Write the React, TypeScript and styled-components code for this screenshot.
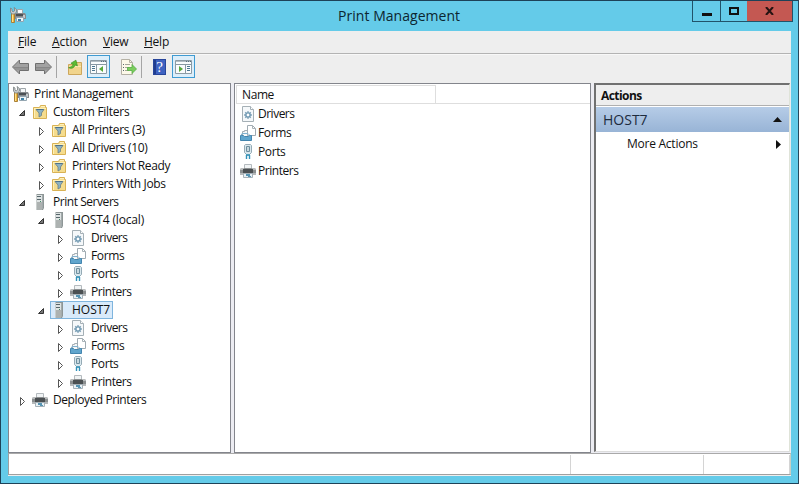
import React from 'react';
import styled, { createGlobalStyle, css } from 'styled-components';

const GlobalStyle = createGlobalStyle`
  * { box-sizing: border-box; }
  html, body { margin: 0; padding: 0; }
  body { font-family: "Open Sans", "Noto Sans", sans-serif; font-size: 12px; color: #111; overflow: hidden; }
  svg { display: block; flex: none; }
`;

const Window = styled.div`
  width: 799px;
  height: 484px;
  display: flex;
  flex-direction: column;
  background: #64cbe9;
  border: 1px solid #1d4258;
  border-right-color: #27495e;
  padding: 0 7px 7px;
`;

const TitleBar = styled.header`
  height: 30px;
  flex: none;
  display: flex;
  align-items: flex-start;
  margin-right: -2px;
`;

const AppIcon = styled.div`
  padding: 6px 0 0 2px;
  width: 180px;
`;

const Title = styled.h1`
  margin: 0;
  flex: 1;
  padding: 5px 0 0 150px;
  font-size: 14px;
  line-height: 20px;
  font-weight: 400;
  letter-spacing: 0.04px;
  white-space: nowrap;
  color: #0c2630;
`;

const Controls = styled.div`
  display: flex;
  height: 21px;
  border: 1px solid #21536a;
  border-top: 0;
`;

const ControlButton = styled.button<{ $w: number; $close?: boolean }>`
  width: ${p => p.$w}px;
  height: 20px;
  padding: 0;
  border: 0;
  border-left: ${p => (p.$close ? 0 : 1)}px solid #21536a;
  background: ${p => (p.$close ? '#c45852' : 'transparent')};
  display: flex;
  align-items: center;
  justify-content: center;
  &:first-child { border-left: 0; }
`;

const Client = styled.div`
  flex: 1;
  width: 783px;
  display: flex;
  flex-direction: column;
  background: #eeeeee;
  min-height: 0;
`;

const MenuBar = styled.nav`
  height: 23px;
  flex: none;
  display: flex;
  padding: 1px 0 0 10px;
  border-bottom: 1px solid #b3b3b3;
`;

const MenuItem = styled.span<{ $w: number; $ls?: number }>`
  width: ${p => p.$w}px;
  line-height: 20px;
  letter-spacing: ${p => p.$ls ?? 0}px;
  white-space: nowrap;
  &::first-letter { text-decoration: underline; }
`;

const Toolbar = styled.div`
  height: 29px;
  flex: none;
  display: flex;
  align-items: center;
  padding: 0 0 5px 3px;
  border-top: 1px solid #f8f8f8;
`;

const Tool = styled.button<{ $ml?: number; $active?: boolean; $w?: number }>`
  width: ${p => p.$w ?? 18}px;
  height: ${p => (p.$active ? 23 : 22)}px;
  margin: 0 0 0 ${p => p.$ml ?? 0}px;
  padding: 0;
  display: flex;
  align-items: center;
  justify-content: center;
  border: 0;
  background: transparent;
  ${p => p.$active && css`
    border: 1px solid #3f9bd2;
    background: #dceefa;
  `}
`;

const Divider = styled.i<{ $ml: number }>`
  width: 1px;
  height: 22px;
  margin-left: ${p => p.$ml}px;
  background: #a5a5a5;
`;

const Panes = styled.main`
  height: 370px;
  flex: none;
  display: grid;
  grid-template-columns: 223px 357px 197px;
  column-gap: 3px;
  background: #ececf2;
`;

const Pane = styled.section`
  background: #fff;
  border: 1px solid #83858c;
  min-width: 0;
`;

const TreePane = styled(Pane)`
  padding-top: 1px;
`;

const ListPane = styled(Pane)`
  padding: 1px 0 0 1px;
`;

const ActionsPane = styled.aside`
  background: #fff;
  border-top: 2px solid #707070;
  border-left: 2px solid #707070;
  border-right: 1px solid #dfe3d8;
  border-bottom: 1px solid #dcdcdc;
  margin: 0 1px 1px 0;
`;

const TreeRow = styled.div<{ $level: number }>`
  height: 18px;
  display: flex;
  align-items: center;
  padding-left: ${p => (p.$level === 0 ? 3 : p.$level * 19 - 10)}px;
`;

const Expander = styled.span`
  width: 13px;
  height: 18px;
  padding-top: 5px;
  flex: none;
`;

const Node = styled.span<{ $selected?: boolean }>`
  height: 18px;
  display: flex;
  align-items: center;
  gap: 5px;
  padding: 0 2px 0 0;
  border: 1px solid transparent;
  ${p => p.$selected && css`
    background: #d9eafa;
    border-color: #7fb5de;
  `}
`;

const Label = styled.span<{ $ls?: number }>`
  line-height: 16px;
  white-space: nowrap;
  letter-spacing: ${p => p.$ls ?? 0}px;
`;

const ListHeader = styled.div`
  width: 200px;
  height: 19px;
  padding-left: 5px;
  line-height: 18px;
  letter-spacing: -0.4px;
  border: 1px solid #dedede;
`;

const HeaderLine = styled.div`
  background: linear-gradient(#dedede, #dedede) 0 18px / 100% 1px no-repeat;
`;

const ListRow = styled.div`
  height: 19px;
  display: flex;
  align-items: center;
  gap: 2px;
  padding-left: 4px;
`;

const ActionsTitle = styled.h2`
  margin: 0;
  height: 21px;
  padding-left: 5px;
  font-size: 12px;
  line-height: 21px;
  font-weight: 700;
  letter-spacing: -0.55px;
  background: #eeeeee;
  border-bottom: 1px solid #b0b0b0;
`;

const ActionsGroup = styled.div`
  height: 25px;
  margin-top: 1px;
  padding: 0 7px 0 7px;
  display: flex;
  align-items: center;
  justify-content: space-between;
  font-size: 14px;
  color: #1d2b3d;
  background: linear-gradient(#b6cce7, #98b4d6);
`;

const ActionRow = styled.div`
  height: 22px;
  margin-top: 1px;
  padding: 0 8px 0 31px;
  display: flex;
  align-items: center;
  justify-content: space-between;
`;

const StatusBar = styled.footer`
  height: 22px;
  flex: none;
  display: grid;
  grid-template-columns: 562px 133px 1fr;
  background: #fff;
  border: 1px solid #a0a0a0;
  border-top-color: #a9a9a9;
  border-right-color: #c9cfc4;
`;

const StatusCell = styled.div`
  margin-top: 1px;
  border-right: 1px solid #d4d4d4;
`;

const PrinterIcon = () => (
  <svg width="16" height="16" viewBox="0 0 16 16">
    <path d="M4.500 1.500h7v5h-7z" fill="#f1f4f5" stroke="#b4babe" />
    <path d="M1 5h14l1 2v5H0V7z" fill="#8b8f90" />
    <path d="M1 5h3v2H0zM12 5h3l1 2h-4z" fill="#b9bcbd" />
    <path d="M3 6h10v4H3z" fill="#4b5052" />
    <path d="M0 10h3v2H0zM13 10h3v2h-3z" fill="#b5b8b9" />
    <path d="M3.500 10.500h9v4h-9z" fill="#e9f1f5" stroke="#a5b1b8" />
    <path d="M6 11h4v2H6zM8 13h3v1H8z" fill="#5795b3" />
  </svg>
);

const ManagementIcon = () => (
  <svg width="16" height="16" viewBox="0 0 16 16">
    <path d="M7.500 2.500h5v4h-5z" fill="#f5f7f8" stroke="#9fa6aa" />
    <path d="M5 6h10l1 2v4H5z" fill="#85898c" />
    <path d="M6 7h7v2H6z" fill="#4a5055" />
    <path d="M13 8h2v3h-2z" fill="#c5c9cb" />
    <path d="M6.500 10.500h7v4h-7z" fill="#eef5f8" stroke="#93a5b0" />
    <path d="M8 12h3v2H8z" fill="#3d81a8" />
    <path d="M1.500 6h3v9.500h-3z" fill="#efb63c" stroke="#a98038" />
    <path d="M2.500 7v8" stroke="#ffe08b" />
    <path d="M.5 1L2 2v2l1 1 1.500-1V2L4 .5l2.500 2V5l-2 2H2L.5 5z" fill="#c9cdce" stroke="#7b8283" strokeWidth=".8" />
  </svg>
);

const FolderIcon = () => (
  <svg width="16" height="16" viewBox="0 0 16 16">
    <path d="M1.500 3.500h6l1-2h5v2h1v11h-13z" fill="#f5dc8d" stroke="#d9b254" />
    <path d="M9 2.500h4" stroke="#fff0bd" />
    <path d="M2 4.500h12M2.500 5v9" stroke="#fff0b6" fill="none" />
    <path d="M4 5.500h8L9.500 9v2.500L7 13V9z" fill="#8db2c2" stroke="#6a7f85" strokeWidth=".8" />
    <path d="M4.500 5.500h7" stroke="#4e718a" />
  </svg>
);

const ServerIcon = () => (
  <svg width="16" height="16" viewBox="0 0 16 16">
    <path d="M4 1l1-1h7v14l-1 2H4z" fill="#8e9696" />
    <path d="M4 1h6v15H4z" fill="#adb2b1" />
    <path d="M4 1h6v7H4z" fill="#dee3e3" />
    <path d="M5 2.500h4M5 5.500h4" stroke="#56666b" />
    <path d="M4.500 1v15" stroke="#c9cecd" />
    <path d="M8 7h1v1H8z" fill="#3e8d66" />
    <path d="M10.500 1v14" stroke="#a2aaab" />
  </svg>
);

const DriverIcon = () => (
  <svg width="16" height="16" viewBox="0 0 16 16">
    <path d="M2.500.5h8l3 3v12h-11z" fill="#f5f8fa" stroke="#a5b0b6" />
    <path d="M10.500.5v3h3" fill="#fff" stroke="#a5b0b6" />
    <path d="M8 5v8M4 9h8M5.200 6.200l5.600 5.600M10.800 6.200l-5.600 5.600" stroke="#85a5ba" strokeWidth="1.300" />
    <circle cx="8" cy="9" r="2.100" fill="#fff" stroke="#6e98b2" strokeWidth="1.300" />
  </svg>
);

const FormsIcon = () => (
  <svg width="16" height="16" viewBox="0 0 16 16">
    <path d="M2.500 10.500v-4h2v-1h5v5" fill="#f5f7f8" stroke="#a5afb5" />
    <path d="M7.500.5h5l3 3v7h-8z" fill="#fff" stroke="#a0abb2" />
    <path d="M12.500.5v3h3" fill="none" stroke="#a9b2b7" />
    <path d="M.5 10.500h3l1 1h4l1-1h2v5H.5z" fill="#5fa5cd" stroke="#4385ae" />
    <path d="M1 10.500l1-2h6l2 2" fill="none" stroke="#82b2cf" />
  </svg>
);

const PortIcon = () => (
  <svg width="16" height="16" viewBox="0 0 16 16">
    <path d="M4.500 1.500l1-1h5l1 1v7l-2 2h-3l-2-2z" fill="#d9e7ed" stroke="#95abb6" />
    <path d="M6.500 2.500h3v5h-3z" fill="#edf5f8" stroke="#6f8f9e" />
    <path d="M8 3v4" stroke="#a2bac5" />
    <path d="M6 10h4v2H6z" fill="#57a0bd" />
    <path d="M6.500 11v4M9.500 11v4" stroke="#3292ba" strokeWidth="1.400" />
  </svg>
);

const icons = {
  printer: PrinterIcon,
  management: ManagementIcon,
  folder: FolderIcon,
  server: ServerIcon,
  driver: DriverIcon,
  forms: FormsIcon,
  port: PortIcon,
};
type IconName = keyof typeof icons;

const OpenArrow = () => (
  <svg width="9" height="10" viewBox="0 0 9 10">
    <path d="M6.500 2.500v5h-5z" fill="#777" stroke="#333" />
  </svg>
);

const ClosedArrow = () => (
  <svg width="9" height="10" viewBox="0 0 9 10">
    <path d="M2.500 1.500v8l4-4z" fill="#fff" stroke="#555" />
  </svg>
);

const ArrowIcon = ({ right = false }: { right?: boolean }) => (
  <svg width="17" height="16" viewBox="0 0 17 16">
    <path
      d={right ? 'M16.500 8L9.500 1v3.500h-9v7h9V15z' : 'M.5 8l7-7v3.500h9v7h-9V15z'}
      fill="#a2a2a2" stroke="#707070"
    />
    <path d={right ? 'M1 8.500h14M1 10h13' : 'M2 8.500h14M3 10h13'} stroke="#878787" />
  </svg>
);

const UpFolderIcon = () => (
  <svg width="16" height="16" viewBox="0 0 16 16">
    <path d="M1.500 5.500h5l1-2h7v12h-13z" fill="#f1d48c" stroke="#cda75c" />
    <path d="M2 7.500h12" stroke="#fbe8b2" />
    <path d="M3 10.500c4 0 5-2 5-5h2.500L7 .8 3.500 5.500H6c0 2-1 3.500-3 5z" fill="#5dbb34" stroke="#399322" strokeWidth=".6" transform="rotate(22 7 6)" />
  </svg>
);

const ConsoleIcon = ({ right = false }: { right?: boolean }) => (
  <svg width="17" height="14" viewBox="0 0 17 14">
    <path d="M.5.5h16v13H.5z" fill="#fafcfd" stroke="#8c9ba5" />
    <path d="M1 1.500h15" stroke="#b2bdc4" />
    <path d="M11 1.500h1M13 1.500h1M15 1.500h1" stroke="#59707e" />
    <path d="M1 4.500h15" stroke="#8798a3" />
    <path d={right ? 'M10.500 5v8' : 'M6.500 5v8'} stroke="#8c9ba5" />
    <path d={right ? 'M12 6.500h3M12 8.500h3M12 10.500h3' : 'M2 6.500h3M2 8.500h3M2 10.500h3'} stroke="#4b7690" />
    <path d={right ? 'M4 6v6l4-3z' : 'M13 6v6L9 9z'} fill="#57a83a" />
  </svg>
);

const ExportIcon = () => (
  <svg width="17" height="16" viewBox="0 0 17 16">
    <path d="M1.500.5h8l3 3v12h-11z" fill="#fdf9e9" stroke="#b5b1a5" />
    <path d="M9.500.5v3h3" fill="none" stroke="#b5b1a5" />
    <path d="M3 5.500h1M3 8.500h1M3 11.500h1" stroke="#5a6670" />
    <path d="M5 5.500h5M5 8.500h4M5 11.500h4" stroke="#a5a798" />
    <path d="M7.500 8.500H12V5.500l4.500 4.500-4.500 4.500v-3H7.500z" fill="#7ccd5e" stroke="#55ae44" strokeWidth=".8" />
  </svg>
);

const HelpText = styled.span`
  width: 13px;
  height: 16px;
  background: linear-gradient(90deg, #203d8f 0 2px, #3e62c1 2px);
  border: 1px solid #27459a;
  color: #fff;
  font: 400 15px/15px "Liberation Serif", serif;
  text-align: center;
  padding-left: 1px;
`;

type TreeItem = { level: number; text: string; icon: IconName; open?: boolean; selected?: boolean; ls?: number };

const children: TreeItem[] = [
  { level: 3, text: 'Drivers', icon: 'driver', ls: -0.5 },
  { level: 3, text: 'Forms', icon: 'forms', ls: -0.35 },
  { level: 3, text: 'Ports', icon: 'port', ls: -0.4 },
  { level: 3, text: 'Printers', icon: 'printer', ls: -0.47 },
];

const tree: TreeItem[] = [
  { level: 0, text: 'Print Management', icon: 'management', ls: -0.33 },
  { level: 1, text: 'Custom Filters', icon: 'folder', open: true, ls: -0.28 },
  { level: 2, text: 'All Printers (3)', icon: 'folder', ls: -0.31 },
  { level: 2, text: 'All Drivers (10)', icon: 'folder', ls: -0.32 },
  { level: 2, text: 'Printers Not Ready', icon: 'folder', ls: -0.39 },
  { level: 2, text: 'Printers With Jobs', icon: 'folder', ls: -0.33 },
  { level: 1, text: 'Print Servers', icon: 'server', open: true, ls: -0.45 },
  { level: 2, text: 'HOST4 (local)', icon: 'server', open: true, ls: -0.16 },
  ...children,
  { level: 2, text: 'HOST7', icon: 'server', open: true, selected: true },
  ...children,
  { level: 1, text: 'Deployed Printers', icon: 'printer', ls: -0.42 },
];

export default function App() {
  return (
    <>
      <GlobalStyle />
      <Window>
        <TitleBar>
          <AppIcon><ManagementIcon /></AppIcon>
          <Title>Print Management</Title>
          <Controls>
            <ControlButton $w={27} aria-label="Minimize">
              <svg width="10" height="14"><path d="M0 9h10v3H0z" fill="#111" /></svg>
            </ControlButton>
            <ControlButton $w={27} aria-label="Maximize">
              <svg width="10" height="8"><path d="M1 1h8v6H1z" fill="none" stroke="#111" strokeWidth="2" /></svg>
            </ControlButton>
            <ControlButton $w={45} $close aria-label="Close">
              <svg width="9" height="8"><path d="M1 0l7 8M8 0L1 8" stroke="#251312" strokeWidth="2" /></svg>
            </ControlButton>
          </Controls>
        </TitleBar>
        <Client>
          <MenuBar>
            <MenuItem $w={34} $ls={-0.2}>File</MenuItem>
            <MenuItem $w={51}>Action</MenuItem>
            <MenuItem $w={41} $ls={-0.25}>View</MenuItem>
            <MenuItem $w={40} $ls={-0.25}>Help</MenuItem>
          </MenuBar>
          <Toolbar>
            <Tool aria-label="Back"><ArrowIcon /></Tool>
            <Tool $ml={5} aria-label="Forward"><ArrowIcon right /></Tool>
            <Divider $ml={4} />
            <Tool $ml={9} aria-label="Up"><UpFolderIcon /></Tool>
            <Tool $ml={3} $w={23} $active aria-label="Console tree"><ConsoleIcon /></Tool>
            <Tool $ml={9} aria-label="Export"><ExportIcon /></Tool>
            <Divider $ml={4} />
            <Tool $ml={8} aria-label="Help"><HelpText>?</HelpText></Tool>
            <Tool $ml={4} $w={23} $active aria-label="Action pane"><ConsoleIcon right /></Tool>
          </Toolbar>
          <Panes>
            <TreePane>
              {tree.map((item, i) => {
                const Icon = icons[item.icon];
                return (
                  <TreeRow key={i} $level={item.level}>
                    {item.level > 0 && <Expander>{item.open ? <OpenArrow /> : <ClosedArrow />}</Expander>}
                    <Node $selected={item.selected}>
                      <Icon />
                      <Label $ls={item.ls}>{item.text}</Label>
                    </Node>
                  </TreeRow>
                );
              })}
            </TreePane>
            <ListPane>
              <HeaderLine><ListHeader>Name</ListHeader></HeaderLine>
              {children.map(item => {
                const Icon = icons[item.icon];
                return <ListRow key={item.text}><Icon /><Label $ls={item.ls}>{item.text}</Label></ListRow>;
              })}
            </ListPane>
            <ActionsPane>
              <ActionsTitle>Actions</ActionsTitle>
              <ActionsGroup>
                HOST7
                <svg width="9" height="5"><path d="M0 5l4.500-5L9 5z" fill="#111" /></svg>
              </ActionsGroup>
              <ActionRow>
                <Label $ls={-0.25}>More Actions</Label>
                <svg width="5" height="9"><path d="M0 0l5 4.500L0 9z" fill="#111" /></svg>
              </ActionRow>
            </ActionsPane>
          </Panes>
          <StatusBar><StatusCell /><StatusCell /><StatusCell /></StatusBar>
        </Client>
      </Window>
    </>
  );
}
